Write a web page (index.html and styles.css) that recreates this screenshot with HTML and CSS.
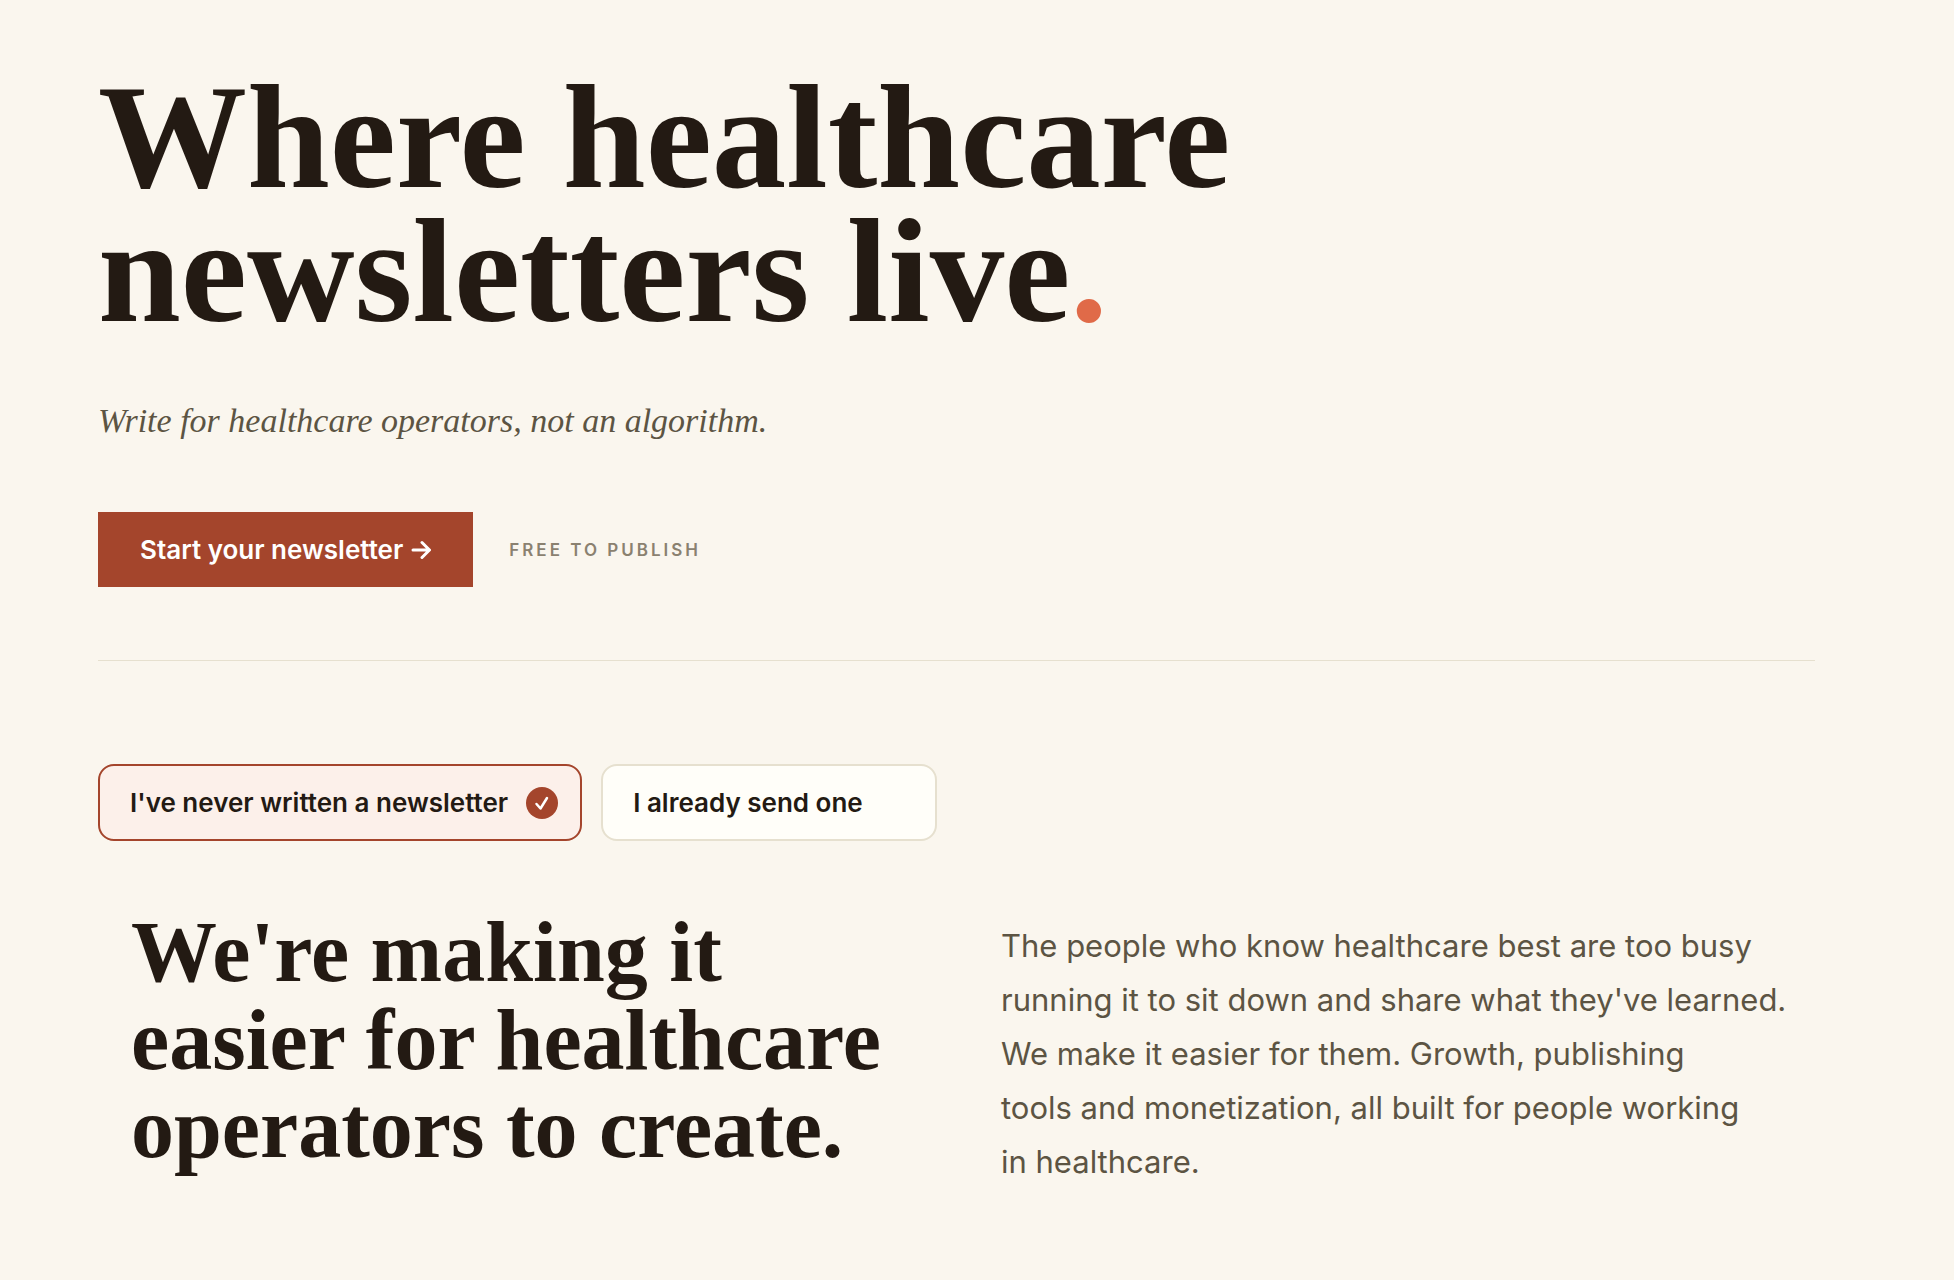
FILE: index.html
```html
<!DOCTYPE html>
<html lang="en">
<head>
    <meta charset="UTF-8">
    <meta name="viewport" content="width=device-width, initial-scale=1.0">
    <title>Where healthcare newsletters live</title>
    <link rel="stylesheet" href="styles.css">
</head>
<body>
    <main class="page">
        <section class="hero">
            <h1 class="hero-title">Where healthcare<br>newsletters live<span class="dot">.</span></h1>
            <p class="hero-sub">Write for healthcare operators, not an algorithm.</p>
            <div class="hero-actions">
                <a href="#start" class="cta">
                    Start your newsletter
                    <svg class="arrow" viewBox="0 0 20 20" aria-hidden="true"><path d="M2 10H18M11 2.500l7.500 7.500-7.500 7.500"/></svg>
                </a>
                <span class="note">Free to publish</span>
            </div>
        </section>

        <section id="start">
            <div class="choices">
                <button type="button" class="choice active" aria-pressed="true">
                    I've never written a newsletter
                    <svg class="check" viewBox="0 0 32 32" aria-hidden="true"><circle cx="16" cy="16" r="16"/><path d="M10.500 17l4 4.500 6.500-10.500"/></svg>
                </button>
                <button type="button" class="choice" aria-pressed="false">
                    I already send one
                    <svg class="check" viewBox="0 0 32 32" aria-hidden="true"><circle cx="16" cy="16" r="16"/><path d="M10.500 17l4 4.500 6.500-10.500"/></svg>
                </button>
            </div>

            <div class="pitch">
                <h2 class="pitch-title">We're making it<br>easier for healthcare<br>operators to create.</h2>
                <p class="pitch-text">
                    The people who know healthcare best are too busy<br>
                    running it to sit down and share what they've learned.<br>
                    We make it easier for them. Growth, publishing<br>
                    tools and monetization, all built for people working<br>
                    in healthcare.
                </p>
            </div>
        </section>
    </main>

    <script>
        const choices = document.querySelectorAll('.choice');

        choices.forEach((choice) => {
            choice.addEventListener('click', () => {
                choices.forEach((c) => {
                    c.classList.toggle('active', c === choice);
                    c.setAttribute('aria-pressed', c === choice);
                });
            });
        });
    </script>
</body>
</html>
```
FILE: styles.css
```css
* {
    box-sizing: border-box;
}
body {
    margin: 0;
    background: #faf6ee;
    color: #231a13;
    font-family: Inter, "Liberation Sans", sans-serif;
}
h1, h2, p {
    margin: 0;
}
.page {
    padding: 70px 139px 80px 98px;
}

/* Hero */
.hero {
    padding-bottom: 73px;
    border-bottom: 1px solid #e6e0cf;
}
.hero-title {
    font-family: "Liberation Serif", serif;
    font-size: 149px;
    font-weight: 700;
    line-height: 134px;
}
.dot {
    color: #e06a48;
}
.hero-sub {
    margin-top: 59px;
    font-family: "Liberation Serif", serif;
    font-size: 34px;
    font-style: italic;
    line-height: 48px;
    color: #5c5443;
}
.hero-actions {
    display: flex;
    align-items: center;
    gap: 36px;
    margin-top: 67px;
}
.cta {
    display: flex;
    align-items: center;
    gap: 8px;
    padding: 22px 42px;
    background: #a4452c;
    color: #fff;
    font-size: 26px;
    font-weight: 600;
    line-height: 31px;
    text-decoration: none;
}
.arrow {
    width: 20px;
    height: 20px;
    fill: none;
    stroke: currentColor;
    stroke-width: 3;
    stroke-linecap: round;
    stroke-linejoin: round;
}
.note {
    font-size: 17px;
    font-weight: 600;
    letter-spacing: 3px;
    text-transform: uppercase;
    color: #8a8170;
}

/* Choice buttons */
.choices {
    display: flex;
    gap: 19px;
    margin-top: 103px;
}
.choice {
    display: flex;
    align-items: center;
    gap: 18px;
    padding: 20px 22px 20px 30px;
    border: 2px solid #e6e0cf;
    border-radius: 16px;
    background: #fffef9;
    color: #231a13;
    font-family: inherit;
    font-size: 26px;
    font-weight: 600;
    line-height: 33px;
    cursor: pointer;
}
.choice.active {
    border-color: #a4452c;
    background: #fcf0ea;
}
.check {
    width: 32px;
    height: 32px;
    visibility: hidden;
}
.choice.active .check {
    visibility: visible;
}
.check circle {
    fill: #a4452c;
}
.check path {
    fill: none;
    stroke: #fff;
    stroke-width: 2.500;
    stroke-linecap: round;
    stroke-linejoin: round;
}

/* Pitch */
.pitch {
    display: grid;
    grid-template-columns: 1fr 1fr;
    gap: 79px;
    margin-top: 67px;
    padding: 0 23px 0 33px;
}
.pitch-title {
    font-family: "Liberation Serif", serif;
    font-size: 86px;
    font-weight: 700;
    line-height: 88px;
}
.pitch-text {
    padding-top: 11px;
    font-size: 31px;
    line-height: 54px;
    color: #5c5443;
}
```
